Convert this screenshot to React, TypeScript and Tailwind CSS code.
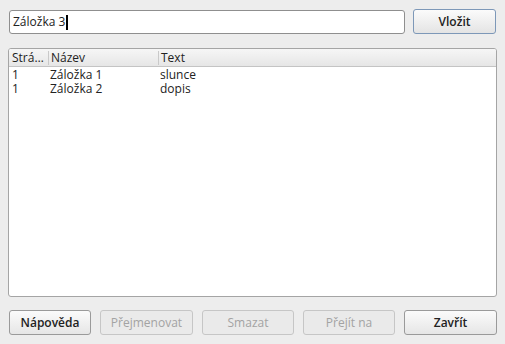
const rows = [
  { page: "1", name: "Záložka 1", text: "slunce" },
  { page: "1", name: "Záložka 2", text: "dopis" },
];

const buttons = [
  { label: "Nápověda", w: "w-[82px]", disabled: false },
  { label: "Přejmenovat", w: "w-[93px]", disabled: true },
  { label: "Smazat", w: "w-[92px]", disabled: true },
  { label: "Přejít na", w: "w-[92px]", disabled: true },
  { label: "Zavřít", w: "w-[93px]", disabled: false },
];

export default function App() {
  return (
    <div
      className="w-[505px] h-[344px] bg-[#ededed] text-[12px] text-[#3c3c3c] flex flex-col overflow-hidden"
      style={{ fontFamily: '"Open Sans", "DejaVu Sans", sans-serif' }}
    >
      {/* input row */}
      <div className="flex items-start pl-[9px] pt-[9px] gap-[8px]">
        <div className="w-[396px] h-[24px] mt-[1px] bg-white border border-[#8f8f8f] rounded-[3px] flex items-center pl-[3px] text-[#222]">
          Záložka 3<span className="w-[2px] h-[15px] bg-black ml-[1px]" />
        </div>
        <button className="w-[83px] h-[25px] rounded-[3px] border border-[#7d98b8] bg-gradient-to-b from-[#fbfbfb] to-[#e4e4e4] text-[#222] font-semibold">
          Vložit
        </button>
      </div>

      {/* bookmarks list */}
      <div className="ml-[8px] mt-[14px] w-[489px] h-[249px] bg-white border border-[#a5a5a5] rounded-[3px] overflow-hidden">
        <div className="flex h-[18px] items-center bg-gradient-to-b from-[#f6f6f6] to-[#e6e6e6] border-b border-[#c4c4c4] text-[#222]">
          <div className="w-[40px] pl-[3px] border-r border-[#c9c9c9] h-[14px] leading-[14px]">Strá…</div>
          <div className="w-[110px] pl-[2px] border-r border-[#c9c9c9] h-[14px] leading-[14px]">Název</div>
          <div className="pl-[2px] leading-[14px]">Text</div>
        </div>
        <div className="pt-[1px] text-[#222]">
          {rows.map((r) => (
            <div key={r.name} className="flex h-[14px] leading-[14px]">
              <div className="w-[40px] pl-[3px]">{r.page}</div>
              <div className="w-[110px] pl-[1px]">{r.name}</div>
              <div className="pl-[1px]">{r.text}</div>
            </div>
          ))}
        </div>
      </div>

      {/* bottom buttons */}
      <div className="flex pl-[9px] mt-[13px] gap-[9px]">
        {buttons.map((b) => (
          <button
            key={b.label}
            className={`${b.w} h-[25px] rounded-[3px] border ${
              b.disabled
                ? "border-[#c6c6c6] bg-[#eaeaea] text-[#a3a3a3]"
                : "border-[#9a9a9a] bg-gradient-to-b from-[#fbfbfb] to-[#e6e6e6] text-[#222] font-semibold"
            }`}
          >
            {b.label}
          </button>
        ))}
      </div>
    </div>
  );
}
